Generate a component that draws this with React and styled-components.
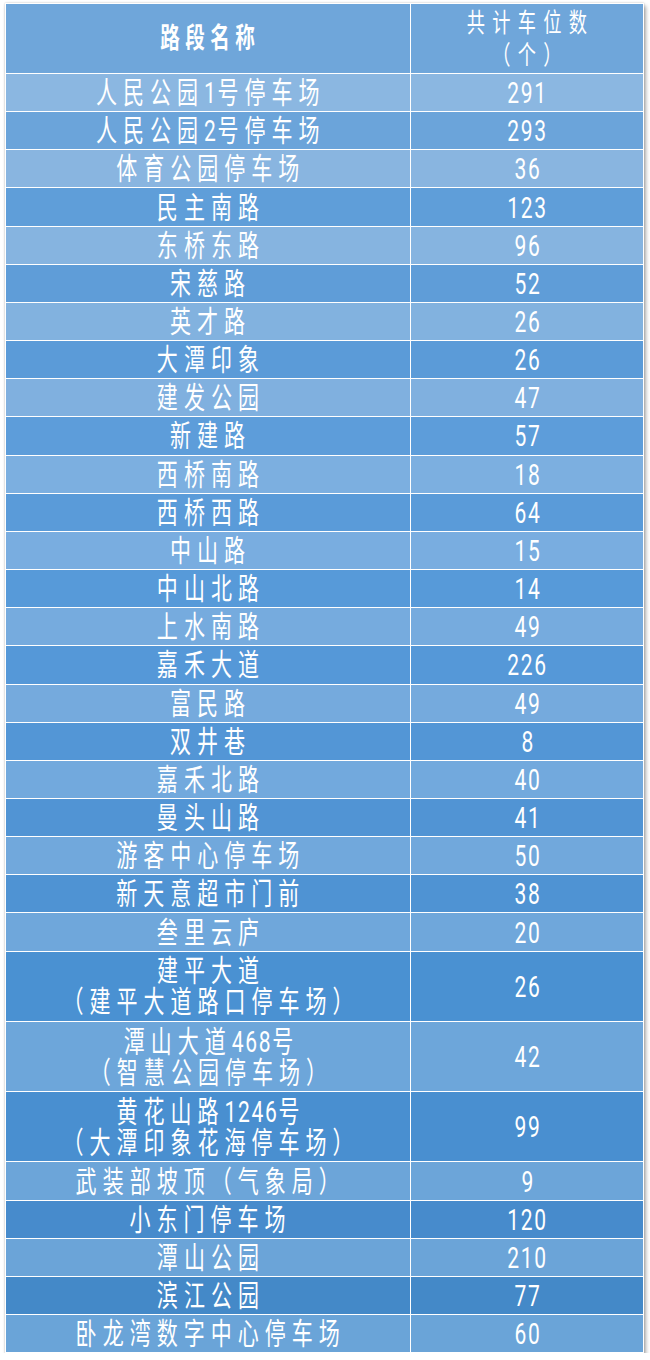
import React from "react";
import styled, { createGlobalStyle } from "styled-components";

const GlobalStyle = createGlobalStyle`
  html, body { margin: 0; padding: 0; background: #ffffff; }
  body { font-family: Roboto, "Noto Sans CJK SC", sans-serif; }
`;

const Table = styled.div`
  margin: 3px 0 0 5px;
  width: 639px;
  box-sizing: border-box;
  border: 1px solid #ffffff;
  box-shadow: 0 0 2px rgba(0, 0, 0, 0.22), 2px 3px 4px rgba(0, 0, 0, 0.32);
`;

const Row = styled.div`
  display: grid;
  grid-template-columns: 404px 1fr;
  height: ${(p) => p.$h}px;
  box-sizing: border-box;
  border-top: ${(p) => (p.$first ? "none" : "1px solid #ffffff")};
  background: ${(p) => p.$bg};
`;

const Cell = styled.div`
  display: flex;
  align-items: center;
  justify-content: center;
  min-width: 0;
  & + & {
    border-left: 1px solid #ffffff;
  }
`;

const Text = styled.span`
  --ls: ${(p) => p.$ls ?? 8.6}px;
  display: inline-block;
  flex-shrink: 0;
  white-space: nowrap;
  text-align: center;
  color: #ffffff;
  font-family: Roboto, "Noto Sans CJK SC", sans-serif;
  font-size: ${(p) => p.$size || 30}px;
  font-weight: ${(p) => (p.$bold ? 700 : 400)};
  line-height: ${(p) => p.$lh || 31}px;
  letter-spacing: var(--ls);
  transform: scaleX(${(p) => p.$sx || 0.7});
`;

const Line = styled.span`
  display: block;
  margin-right: calc(var(--ls) * -1);
`;

const Digits = styled.span`
  letter-spacing: 2.4px;
`;

const Label = ({ text }) =>
  text.split(/(\d+)/).map((part, i) =>
    /^\d+$/.test(part) ? <Digits key={i}>{part}</Digits> : <React.Fragment key={i}>{part}</React.Fragment>
  );

const rows = [
  { name: ["人民公园1号停车场"], count: "291", bg: "#8bb7e1" },
  { name: ["人民公园2号停车场"], count: "293", bg: "#6ba4da" },
  { name: ["体育公园停车场"], count: "36", bg: "#89b5e0" },
  { name: ["民主南路"], count: "123", bg: "#5f9ed9" },
  { name: ["东桥东路"], count: "96", bg: "#86b4e0" },
  { name: ["宋慈路"], count: "52", bg: "#5f9dd8" },
  { name: ["英才路"], count: "26", bg: "#82b2df" },
  { name: ["大潭印象"], count: "26", bg: "#5b9bd8" },
  { name: ["建发公园"], count: "47", bg: "#80b0df" },
  { name: ["新建路"], count: "57", bg: "#5d9dda" },
  { name: ["西桥南路"], count: "18", bg: "#7cafe0" },
  { name: ["西桥西路"], count: "64", bg: "#5a9bd9" },
  { name: ["中山路"], count: "15", bg: "#79ade0" },
  { name: ["中山北路"], count: "14", bg: "#579ad9" },
  { name: ["上水南路"], count: "49", bg: "#76abde" },
  { name: ["嘉禾大道"], count: "226", bg: "#5598d8" },
  { name: ["富民路"], count: "49", bg: "#75aadd" },
  { name: ["双井巷"], count: "8", bg: "#5396d6" },
  { name: ["嘉禾北路"], count: "40", bg: "#72a9dd" },
  { name: ["曼头山路"], count: "41", bg: "#5194d4" },
  { name: ["游客中心停车场"], count: "50", bg: "#71a8dc" },
  { name: ["新天意超市门前"], count: "38", bg: "#4f93d3" },
  { name: ["叁里云庐"], count: "20", bg: "#6fa7db" },
  { name: ["建平大道", "（建平大道路口停车场）"], count: "26", bg: "#4a91d2" },
  { name: ["潭山大道468号", "（智慧公园停车场）"], count: "42", bg: "#6da6da" },
  { name: ["黄花山路1246号", "（大潭印象花海停车场）"], count: "99", bg: "#498fd0" },
  { name: ["武装部坡顶（气象局）"], count: "9", bg: "#6ca5d9" },
  { name: ["小东门停车场"], count: "120", bg: "#478bcc" },
  { name: ["潭山公园"], count: "210", bg: "#6ba4d8" },
  { name: ["滨江公园"], count: "77", bg: "#4489c8" },
  { name: ["卧龙湾数字中心停车场"], count: "60", bg: "#6aa4d8" },
];

export default function App() {
  return (
    <>
      <GlobalStyle />
      <Table>
        <Row $h={69} $first $bg="#6fa6da">
          <Cell>
            <Text $bold $size={28} $ls={7.7}>
              <Line>路段名称</Line>
            </Text>
          </Cell>
          <Cell>
            <Text $size={26} $ls={10.4} $lh={32}>
              <Line>共计车位数</Line>
              <Line>（个）</Line>
            </Text>
          </Cell>
        </Row>
        {rows.map((r, i) => (
          <Row key={i} $h={r.name.length > 1 ? 70.3 : 38.17} $bg={r.bg}>
            <Cell>
              <Text>
                {r.name.map((n, j) => (
                  <Line key={j}>
                    <Label text={n} />
                  </Line>
                ))}
              </Text>
            </Cell>
            <Cell>
              <Text $ls={2.4}>
                <Line>{r.count}</Line>
              </Text>
            </Cell>
          </Row>
        ))}
      </Table>
    </>
  );
}
